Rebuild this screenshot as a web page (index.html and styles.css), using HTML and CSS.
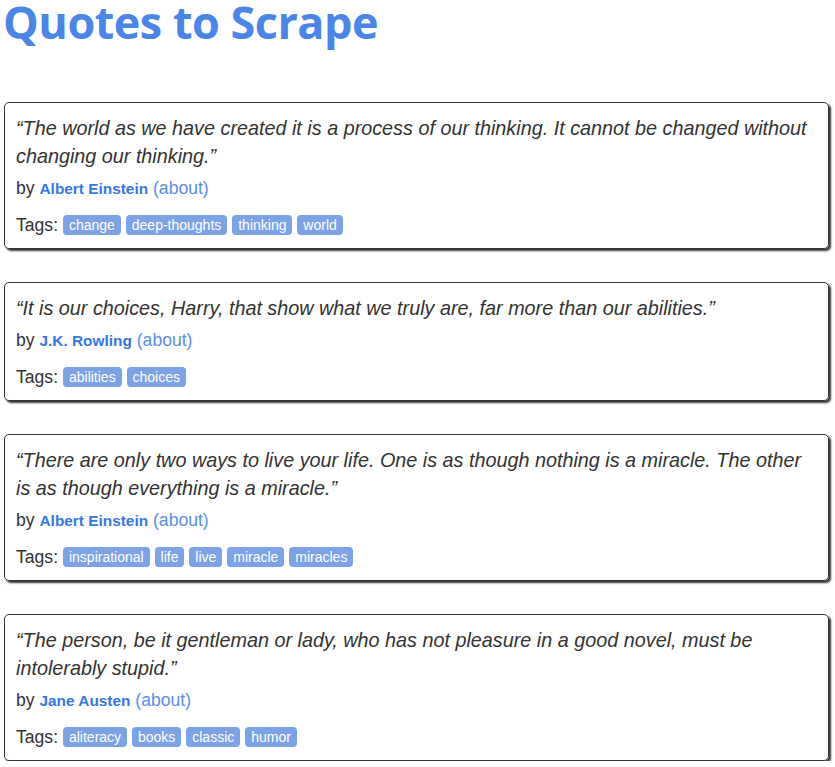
FILE: index.html
```html
<!DOCTYPE html>
<html>
<head>
<meta charset="utf-8">
<link rel="stylesheet" href="styles.css">
</head>
<body>
<h1 class="title">Quotes to Scrape</h1>
<div class="quotes">
  <div class="quote">
    <span class="text">“The world as we have created it is a process of our thinking. It cannot be changed without changing our thinking.”</span>
    <span class="by">by <small class="author">Albert Einstein</small> <a class="about">(about)</a></span>
    <div class="tags">Tags: <a class="tag">change</a> <a class="tag">deep-thoughts</a> <a class="tag">thinking</a> <a class="tag">world</a></div>
  </div>
  <div class="quote">
    <span class="text">“It is our choices, Harry, that show what we truly are, far more than our abilities.”</span>
    <span class="by">by <small class="author">J.K. Rowling</small> <a class="about">(about)</a></span>
    <div class="tags">Tags: <a class="tag">abilities</a> <a class="tag">choices</a></div>
  </div>
  <div class="quote">
    <span class="text">“There are only two ways to live your life. One is as though nothing is a miracle. The other is as though everything is a miracle.”</span>
    <span class="by">by <small class="author">Albert Einstein</small> <a class="about">(about)</a></span>
    <div class="tags">Tags: <a class="tag">inspirational</a> <a class="tag">life</a> <a class="tag">live</a> <a class="tag">miracle</a> <a class="tag">miracles</a></div>
  </div>
  <div class="quote">
    <span class="text">“The person, be it gentleman or lady, who has not pleasure in a good novel, must be intolerably stupid.”</span>
    <span class="by">by <small class="author">Jane Austen</small> <a class="about">(about)</a></span>
    <div class="tags">Tags: <a class="tag">aliteracy</a> <a class="tag">books</a> <a class="tag">classic</a> <a class="tag">humor</a></div>
  </div>
</div>
</body>
</html>
```
FILE: styles.css
```css
html, body {
  margin: 0;
  padding: 0;
  background: #fff;
}
body {
  font-family: "Liberation Sans", Arial, sans-serif;
  color: #333;
  padding: 0 6px 0 4px;
}
.title {
  margin: -4px 0 0 -1px;
  padding: 0;
  font-family: "Open Sans", "Liberation Sans", sans-serif;
  font-weight: 700;
  font-size: 45px;
  line-height: 52px;
  color: #4a86e8;
  letter-spacing: -0.5px;
}
.quotes {
  margin-top: 54px;
  display: flex;
  flex-direction: column;
  gap: 33px;
}
.quote {
  border: 1px solid #333;
  border-radius: 5px;
  box-shadow: 2px 2px 2px #333;
  padding: 11px 11px 11px;
}
.text {
  display: block;
  font-style: italic;
  font-size: 19.8px;
  line-height: 28px;
}
.by {
  display: block;
  font-size: 17.6px;
  line-height: 24px;
  margin-top: 6px;
}
.author {
  font-size: 15.4px;
  font-weight: 700;
  color: #3677e8;
}
.about {
  color: #5c8ee8;
}
.tags {
  margin-top: 12px;
  font-size: 17.6px;
  line-height: 24px;
}
.tag {
  display: inline-block;
  background: #7ca3e6;
  color: #fff;
  font-size: 14px;
  line-height: 20px;
  padding: 0 6px;
  border-radius: 4px;
  vertical-align: 1px;
}
```
